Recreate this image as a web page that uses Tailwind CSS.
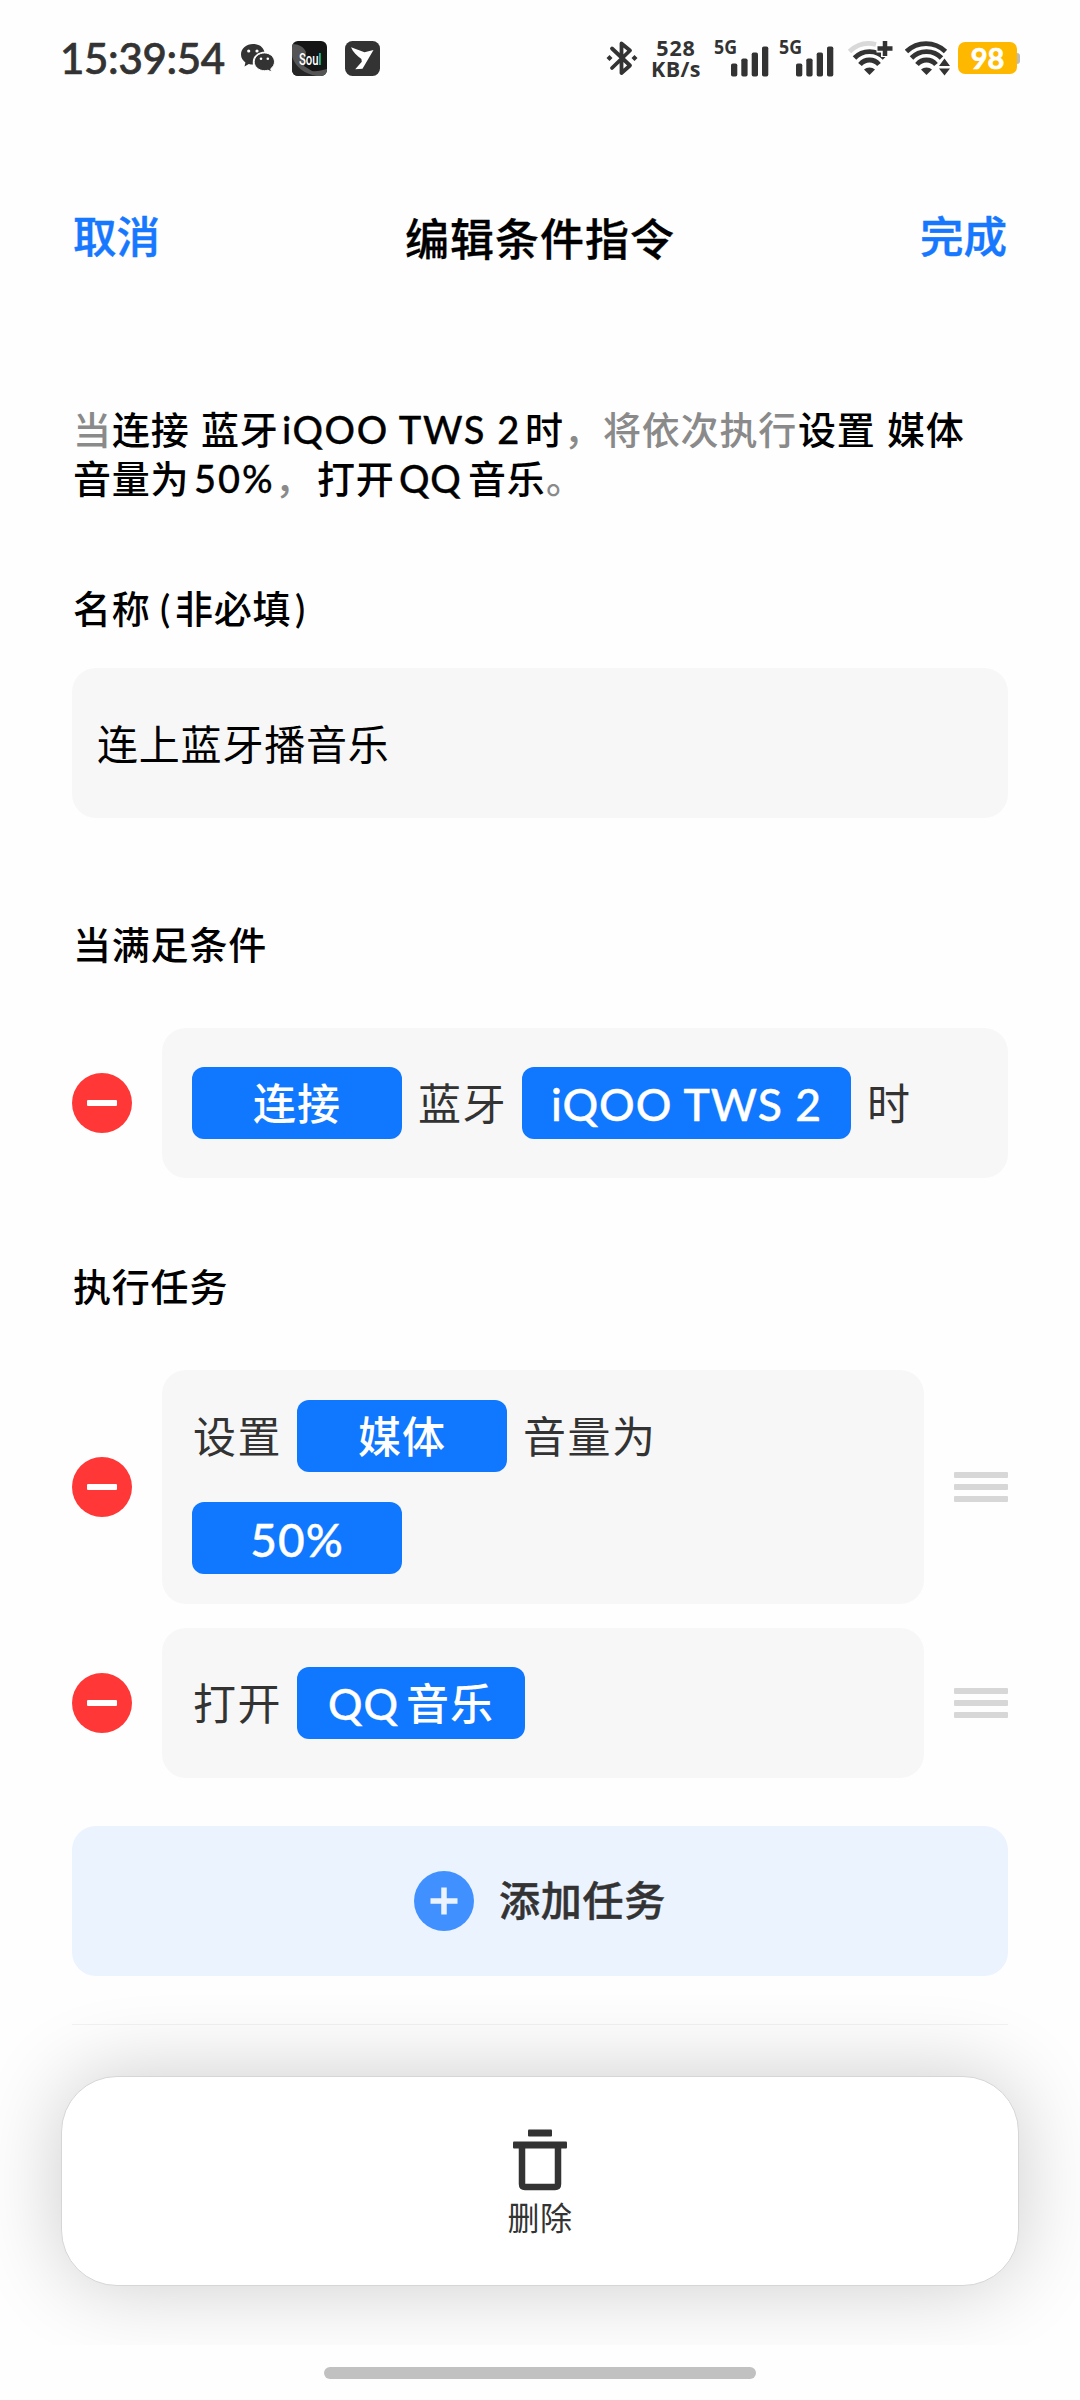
<!DOCTYPE html>
<html lang="zh-CN">
<head>
  <meta charset="UTF-8" />
  <meta name="viewport" content="width=device-width, initial-scale=1.0" />
  <title>编辑条件指令</title>
  <script src="https://cdn.jsdelivr.net/npm/@tailwindcss/browser@4"></script>
</head>

<body class="bg-[#fefefe]">
  <main class="relative w-[1080px] h-[2400px] overflow-hidden flex flex-col font-['Lato','Noto_Sans_CJK_SC',sans-serif] font-medium text-black whitespace-nowrap">

    <!-- Status bar -->
    <div class="h-[116px] shrink-0 flex items-center pl-[60px] text-[#333]">
      <span class="w-[181px] text-[42px] leading-none tracking-[-0.3px] [-webkit-text-stroke:0.7px_#333]">15:39:54</span>
      <svg class="w-[34px] h-[30px]" viewBox="0 0 34 30" fill="#333">
        <path d="M12 1C5.500 1 0 5.500 0 11.500c0 3.400 1.800 6 4.400 7.900L3.500 23.500l4.300-2.500c1.500.4 2.700.6 4.200.6-1.500-7 4-13 11.400-12.900C22 3.500 17.500 1 12 1z" />
        <path d="M33.500 18.800c0-4.900-4.600-8.900-10.100-8.900s-10.200 4-10.200 8.900c0 5 4.700 8.900 10.200 8.900 1.300 0 2.500-.2 3.600-.5l3.500 1.800-.8-3.200c2.300-1.700 3.800-4.200 3.800-7z" stroke="#fefefe" stroke-width="1" />
        <g fill="#fefefe">
          <circle cx="7.700" cy="8" r="1.600" /><circle cx="16" cy="8" r="1.600" />
          <circle cx="20" cy="15.800" r="1.300" /><circle cx="26.800" cy="15.800" r="1.300" />
        </g>
      </svg>
      <svg class="ml-[17px] w-[35px] h-[35px] rounded-[6px] bg-[#151515]" viewBox="0 0 35 35">
        <path d="M0 3c7 0 12 3 14 8l-2 14 8 5c5 1 10-1 15-2v7H18C6 34 0 24 0 14z" fill="#555" />
        <path d="M0 16c4 10 12 17 25 19H0z" fill="#262626" />
        <text x="7" y="24" font-family="Roboto" font-weight="500" font-size="17" textLength="22.500" lengthAdjust="spacingAndGlyphs" fill="#fff">Sou<tspan fill="#1fe0c8">l</tspan></text>
      </svg>
      <svg class="ml-[18px] w-[35px] h-[35px]" viewBox="0 0 35 35">
        <rect width="35" height="35" rx="7.500" fill="#333" />
        <path d="M6 6.300l13.500 5 9-2.300L17.500 27.700l-7.300.6 6.600-7.600-.4-2.600C12 15 8 11 6 6.300z" fill="#fff" />
      </svg>

      <!-- Bluetooth -->
      <svg class="ml-[226px] w-[32px] h-[36px]" viewBox="0 0 32 36" fill="none" stroke="#333" stroke-width="3.800" stroke-linecap="round" stroke-linejoin="round">
        <path d="M6 8.500L24 25.500l-8.500 7.500V3.500L24 10.500 6 28" />
        <path d="M3.500 15l3 3-3 3-3-3zM28.500 15l3 3-3 3-3-3z" fill="#333" stroke="none" />
      </svg>
      <div class="ml-[13px] w-[50px] flex flex-col items-center text-[21.500px] leading-[21px] font-bold font-['Open_Sans']">
        <span class="tracking-[0.800px]">528</span>
        <span class="tracking-[0.400px]">KB/s</span>
      </div>
      <!-- Signal strength, two SIMs -->
      <svg class="ml-[13px] w-[56px] h-[40px] overflow-visible" viewBox="0 0 56 40" fill="#333">
        <text x="0" y="15.500" font-family="Open Sans" font-weight="700" font-size="19.500" textLength="23" lengthAdjust="spacingAndGlyphs">5G</text>
        <rect x="17" y="25.500" width="6.300" height="13" rx="1.800" /><rect x="27.300" y="20.500" width="6.300" height="18" rx="1.800" />
        <rect x="37.700" y="14.500" width="6.300" height="24" rx="1.800" /><rect x="48" y="8.500" width="6.300" height="30" rx="1.800" />
      </svg>
      <svg class="ml-[9px] w-[56px] h-[40px] overflow-visible" viewBox="0 0 56 40" fill="#333">
        <text x="0" y="15.500" font-family="Open Sans" font-weight="700" font-size="19.500" textLength="23" lengthAdjust="spacingAndGlyphs">5G</text>
        <rect x="17" y="25.500" width="6.300" height="13" rx="1.800" /><rect x="27.300" y="20.500" width="6.300" height="18" rx="1.800" />
        <rect x="37.700" y="14.500" width="6.300" height="24" rx="1.800" /><rect x="48" y="8.500" width="6.300" height="30" rx="1.800" />
      </svg>
      <svg class="ml-[13px] w-[45px] h-[36px]" viewBox="0 0 45 36" fill="none" stroke="#333" stroke-width="4.800">
        <path d="M1.500 11.500C10 3.500 19 2 28 4.500" stroke="#d9d9d9" />
        <path d="M6.500 18c8-8.500 22-8.500 30 0M12 24.500c5-6 14-6 19 0" />
        <path d="M21.500 35l-5.500-5.500c3-2.800 8-2.800 11 0z" fill="#333" stroke="none" />
        <path d="M37 0v17M28.500 8.500h17" stroke="#fefefe" stroke-width="8" />
        <path d="M37 1v15M29.500 8.500h15" stroke-width="4.500" />
      </svg>
      <svg class="ml-[12px] w-[46px] h-[36px]" viewBox="0 0 46 36" fill="none" stroke="#333" stroke-width="4.800">
        <path d="M1.500 11.500c11-10.500 28-10.500 39 0M6.500 18c8-8.500 22-8.500 30 0M12 24.500c5-6 14-6 19 0" />
        <path d="M21.500 35l-5.500-5.500c3-2.800 8-2.800 11 0z" fill="#333" stroke="none" />
        <path d="M39.500 16l6.500 9v4l-6.500 8.500-7.500-8.500v-4z" fill="#fefefe" stroke="none" />
        <path d="M39.500 18.500l5.500 7.500H34zM39.500 35.500L45 28.500H34z" fill="#333" stroke="none" />
      </svg>
      <div class="ml-[7px] flex items-center">
        <div class="w-[59px] h-[32px] rounded-[7px] bg-[#ffb800] text-white font-bold text-[29px] leading-[31px] text-center [-webkit-text-stroke:0.7px_#fff]">98</div>
        <div class="w-[3px] h-[11px] rounded-r-[3px] bg-[#bbb]"></div>
      </div>
    </div>

    <!-- Title bar -->
    <header class="h-[124px] shrink-0 flex items-start justify-between px-[73px] leading-[60px]">
      <button class="mt-[90px] text-[43.500px] text-[#1677ff] leading-[60px] [-webkit-text-stroke:0.5px_#1677ff]">取消</button>
      <h1 class="mt-[93px] text-[44px] tracking-[1px] [-webkit-text-stroke:0.3px_#000]">编辑条件指令</h1>
      <button class="mt-[90px] text-[43.500px] text-[#1677ff] leading-[60px] [-webkit-text-stroke:0.5px_#1677ff]">完成</button>
    </header>

    <!-- Summary -->
    <section class="mt-[165px] h-[98px] shrink-0 px-[73px] text-[38px] leading-[49px] tracking-[0.800px]">
      <p class="flex"><span class="w-[39px] text-[#8a8a8a]">当</span><span class="w-[89px]">连接</span><span class="w-[81px]">蓝牙</span><span class="w-[243px] tracking-[1.600px] [-webkit-text-stroke:0.3px_#000]">iQOO TWS 2</span><span class="w-[39px]">时</span><span class="w-[39px] text-[#8a8a8a]">，</span><span class="w-[195px] text-[#8a8a8a]">将依次执行</span><span class="w-[89px]">设置</span><span>媒体</span></p>
      <p class="flex"><span class="w-[121px]">音量为</span><span class="w-[81px] tracking-[2px] [-webkit-text-stroke:0.3px_#000]">50%</span><span class="w-[42px] text-[#8a8a8a]">，</span><span class="w-[82px]">打开</span><span class="w-[69px] [-webkit-text-stroke:0.3px_#000]">QQ</span><span class="w-[78px]">音乐</span><span class="text-[#8a8a8a]">。</span></p>
    </section>

    <div class="flex flex-col px-[72px]">
      <!-- Name -->
      <h2 class="mt-[80px] h-[50px] leading-[50px] text-[38px] tracking-[0.800px] pl-px flex"><span class="w-[87px]">名称</span><span class="w-[15px]">(</span><span class="w-[120px]">非必填</span><span>)</span></h2>
      <div class="mt-[35px] h-[150px] rounded-[24px] bg-[#f7f7f7] flex items-center pl-[25px] pt-[3px] text-[41px] tracking-[0.800px] font-normal">连上蓝牙播音乐</div>

      <!-- Condition -->
      <h2 class="mt-[101px] h-[50px] leading-[50px] text-[38px] tracking-[0.800px] pl-px">当满足条件</h2>
      <div class="mt-[59px] flex items-center gap-[30px]">
        <div class="w-[60px] h-[60px] rounded-full bg-[#ff3737] flex items-center justify-center"><span class="w-[30px] h-[6px] rounded-[1px] bg-white"></span></div>
        <div class="w-[846px] h-[150px] rounded-[24px] bg-[#f7f7f7] flex items-center pl-[30px] text-[43px] tracking-[1px] font-normal text-[#333]">
          <span class="w-[210px] h-[72px] pt-[3px] rounded-[12px] bg-[#1077ff] text-white font-medium flex items-center justify-center">连接</span>
          <span class="ml-[16px] w-[104px] pt-[3px] tracking-[1.500px]">蓝牙</span>
          <span class="w-[329px] h-[72px] pt-[3px] rounded-[12px] bg-[#1077ff] text-white font-medium flex items-center justify-center text-[44.500px] [-webkit-text-stroke:0.4px_#fff]">iQOO TWS 2</span>
          <span class="ml-[16px] pt-[3px]">时</span>
        </div>
      </div>

      <!-- Tasks -->
      <h2 class="mt-[83px] h-[50px] leading-[50px] text-[38px] tracking-[0.800px] pl-px">执行任务</h2>
      <div class="mt-[59px] flex items-center gap-[30px]">
        <div class="w-[60px] h-[60px] rounded-full bg-[#ff3737] flex items-center justify-center"><span class="w-[30px] h-[6px] rounded-[1px] bg-white"></span></div>
        <div class="w-[762px] h-[234px] rounded-[24px] bg-[#f7f7f7] flex flex-col justify-center gap-[30px] pl-[30px] text-[43px] tracking-[1px] font-normal text-[#333]">
          <div class="flex items-center h-[72px]">
            <span class="w-[105px] pl-px pt-[3px] tracking-[1.500px]">设置</span>
            <span class="w-[210px] h-[72px] pt-[3px] rounded-[12px] bg-[#1077ff] text-white font-medium flex items-center justify-center">媒体</span>
            <span class="ml-[16px] pt-[3px] tracking-[1.500px]">音量为</span>
          </div>
          <span class="w-[210px] h-[72px] pt-[3px] rounded-[12px] bg-[#1077ff] text-white font-medium flex items-center justify-center text-[46px] [-webkit-text-stroke:0.4px_#fff]">50%</span>
        </div>
        <div class="w-[54px] flex flex-col gap-[6px]"><i class="h-[6px] rounded-[1px] bg-[#d7d7d7]"></i><i class="h-[6px] rounded-[1px] bg-[#d7d7d7]"></i><i class="h-[6px] rounded-[1px] bg-[#d7d7d7]"></i></div>
      </div>
      <div class="mt-[24px] flex items-center gap-[30px]">
        <div class="w-[60px] h-[60px] rounded-full bg-[#ff3737] flex items-center justify-center"><span class="w-[30px] h-[6px] rounded-[1px] bg-white"></span></div>
        <div class="w-[762px] h-[150px] rounded-[24px] bg-[#f7f7f7] flex items-center pl-[30px] text-[43px] tracking-[1px] font-normal text-[#333]">
          <span class="w-[105px] pl-px pt-[3px] tracking-[1.500px]">打开</span>
          <span class="w-[228px] h-[72px] pt-[3px] rounded-[12px] bg-[#1077ff] text-white font-medium flex items-center justify-center gap-[7px]"><span class="[-webkit-text-stroke:0.4px_#fff]">QQ</span><span>音乐</span></span>
        </div>
        <div class="w-[54px] flex flex-col gap-[6px]"><i class="h-[6px] rounded-[1px] bg-[#d7d7d7]"></i><i class="h-[6px] rounded-[1px] bg-[#d7d7d7]"></i><i class="h-[6px] rounded-[1px] bg-[#d7d7d7]"></i></div>
      </div>

      <button class="mt-[48px] h-[150px] rounded-[24px] bg-[#ebf3ff] flex items-center justify-center gap-[25px] text-[41px] tracking-[0.800px] text-[#333]">
        <svg class="w-[60px] h-[60px]" viewBox="0 0 60 60">
          <circle cx="30" cy="30" r="30" fill="#4091ff" />
          <path d="M30 16.500v27M16.500 30h27" stroke="#ebf3ff" stroke-width="5.500" />
        </svg>
        <span class="[-webkit-text-stroke:0.5px_#333]">添加任务</span>
      </button>
      <div class="mt-[48px] h-px bg-[#f2f2f2]"></div>
    </div>

    <!-- Floating bottom bar; its shadow stops above the gesture area -->
    <div class="absolute left-0 top-[1960px] w-[1080px] h-[385px] overflow-hidden px-[61px] pt-[116px]">
      <button class="w-[958px] h-[210px] rounded-[56px] bg-white border border-[#d6d6d6] shadow-[0_0_84px_rgba(0,0,0,0.2)] flex flex-col items-center text-[#333]">
        <svg class="mt-[52px] w-[54px] h-[62px]" viewBox="0 0 54 62" fill="#333">
          <rect x="15" y="0.500" width="24" height="7" rx="1" />
          <rect x="0" y="12.500" width="54" height="7" rx="1" />
          <path d="M9 19v36q0 3 3 3h30q3 0 3-3V19" fill="none" stroke="#333" stroke-width="6.500" />
        </svg>
        <span class="mt-[7px] text-[32px] leading-[40px] tracking-[0.500px] font-normal">删除</span>
      </button>
    </div>
    <div class="absolute left-[324px] top-[2367px] w-[432px] h-[12px] rounded-full bg-[#c1c1c1]"></div>
  </main>
</body>
</html>
